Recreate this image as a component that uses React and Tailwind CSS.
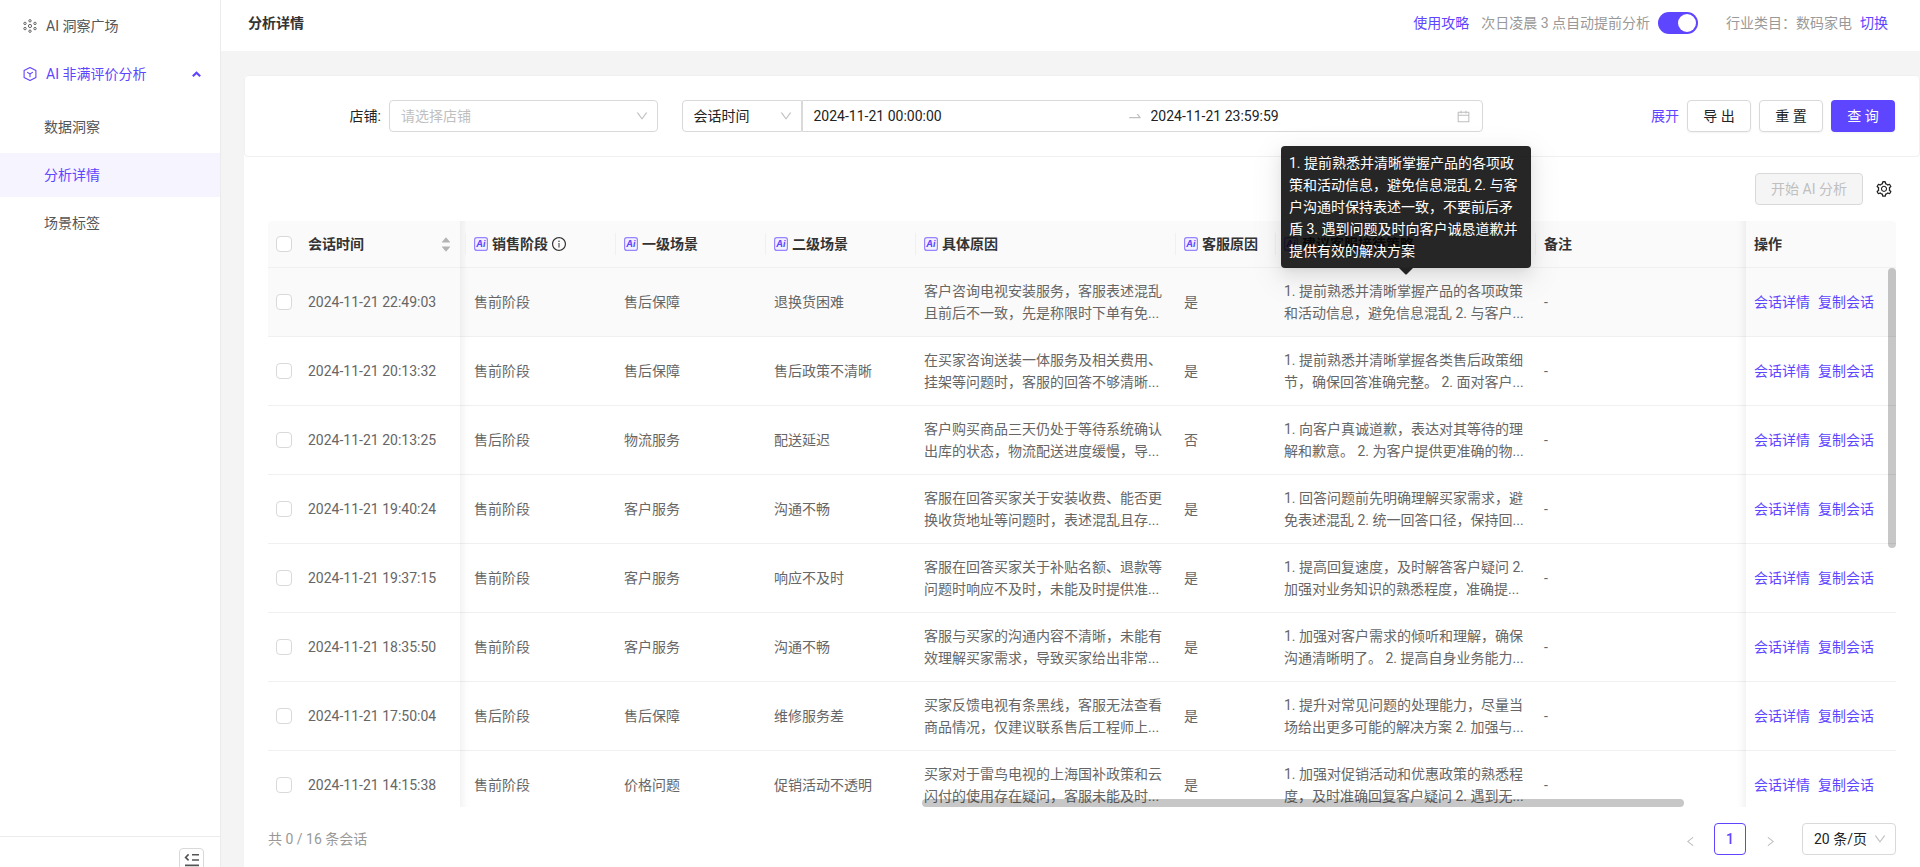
import React, { useState } from 'react';
import {
    AiFillCaretDown,
    AiFillCaretUp,
    AiOutlineCalendar,
    AiOutlineDown,
    AiOutlineInfoCircle,
    AiOutlineLeft,
    AiOutlineRight,
    AiOutlineSetting,
    AiOutlineSwapRight,
} from 'react-icons/ai';

const ROWS = [
    {
        time: '2024-11-21 22:49:03',
        stage: '售前阶段',
        first: '售后保障',
        second: '退换货困难',
        reason: '客户咨询电视安装服务，客服表述混乱\n且前后不一致，先是称限时下单有免...',
        service: '是',
        advice: '1. 提前熟悉并清晰掌握产品的各项政策\n和活动信息，避免信息混乱 2. 与客户...',
    },
    {
        time: '2024-11-21 20:13:32',
        stage: '售前阶段',
        first: '售后保障',
        second: '售后政策不清晰',
        reason: '在买家咨询送装一体服务及相关费用、\n挂架等问题时，客服的回答不够清晰...',
        service: '是',
        advice: '1. 提前熟悉并清晰掌握各类售后政策细\n节，确保回答准确完整。 2. 面对客户...',
    },
    {
        time: '2024-11-21 20:13:25',
        stage: '售后阶段',
        first: '物流服务',
        second: '配送延迟',
        reason: '客户购买商品三天仍处于等待系统确认\n出库的状态，物流配送进度缓慢，导...',
        service: '否',
        advice: '1. 向客户真诚道歉，表达对其等待的理\n解和歉意。 2. 为客户提供更准确的物...',
    },
    {
        time: '2024-11-21 19:40:24',
        stage: '售前阶段',
        first: '客户服务',
        second: '沟通不畅',
        reason: '客服在回答买家关于安装收费、能否更\n换收货地址等问题时，表述混乱且存...',
        service: '是',
        advice: '1. 回答问题前先明确理解买家需求，避\n免表述混乱 2. 统一回答口径，保持回...',
    },
    {
        time: '2024-11-21 19:37:15',
        stage: '售前阶段',
        first: '客户服务',
        second: '响应不及时',
        reason: '客服在回答买家关于补贴名额、退款等\n问题时响应不及时，未能及时提供准...',
        service: '是',
        advice: '1. 提高回复速度，及时解答客户疑问 2.\n加强对业务知识的熟悉程度，准确提...',
    },
    {
        time: '2024-11-21 18:35:50',
        stage: '售前阶段',
        first: '客户服务',
        second: '沟通不畅',
        reason: '客服与买家的沟通内容不清晰，未能有\n效理解买家需求，导致买家给出非常...',
        service: '是',
        advice: '1. 加强对客户需求的倾听和理解，确保\n沟通清晰明了。 2. 提高自身业务能力...',
    },
    {
        time: '2024-11-21 17:50:04',
        stage: '售后阶段',
        first: '售后保障',
        second: '维修服务差',
        reason: '买家反馈电视有条黑线，客服无法查看\n商品情况，仅建议联系售后工程师上...',
        service: '是',
        advice: '1. 提升对常见问题的处理能力，尽量当\n场给出更多可能的解决方案 2. 加强与...',
    },
    {
        time: '2024-11-21 14:15:38',
        stage: '售前阶段',
        first: '价格问题',
        second: '促销活动不透明',
        reason: '买家对于雷鸟电视的上海国补政策和云\n闪付的使用存在疑问，客服未能及时...',
        service: '是',
        advice: '1. 加强对促销活动和优惠政策的熟悉程\n度，及时准确回复客户疑问 2. 遇到无...',
    },
];

const FULL_ADVICE =
    '1. 提前熟悉并清晰掌握产品的各项政策和活动信息，避免信息混乱 2. 与客户沟通时保持表述一致，不要前后矛盾 3. 遇到问题及时向客户诚恳道歉并提供有效的解决方案';

const DotsIcon = () => (
    <svg width="14" height="14" viewBox="0 0 14 14" fill="none" stroke="currentColor" strokeWidth="0.9">
        <circle cx="7" cy="1.8" r="1.2" />
        <circle cx="7" cy="7" r="1.6" />
        <circle cx="7" cy="12.2" r="1.2" />
        <circle cx="2" cy="4.4" r="1.2" />
        <circle cx="2" cy="9.6" r="1.2" />
        <circle cx="12" cy="4.4" r="1.2" />
        <circle cx="12" cy="9.6" r="1.2" />
    </svg>
);

const CubeIcon = () => (
    <svg width="14" height="14" viewBox="0 0 14 14" fill="none" stroke="currentColor" strokeWidth="1.1" strokeLinejoin="round">
        <path d="M7 0.6 L12.9 3.5 V10.5 L7 13.4 L1.1 10.5 V3.5 Z" />
        <path d="M4.5 5.4 L7 7 L9.5 5.4 M7 7 V9.8" strokeLinecap="round" />
    </svg>
);

const ArrowUpIcon = () => (
    <svg width="9" height="6" viewBox="0 0 9 6" fill="none" stroke="currentColor" strokeWidth="2.2">
        <path d="M0.8 5.2 L4.5 1.8 L8.2 5.2" />
    </svg>
);

const FoldIcon = () => (
    <svg width="16" height="14" viewBox="0 0 16 14" fill="none" stroke="currentColor" strokeWidth="1.6">
        <path d="M4.6 1.4 L1.6 4.4 L4.6 7.4" />
        <path d="M8 1.8 H15 M8 7 H15 M1 12.4 H15" />
    </svg>
);

const AiBadge = () => (
    <svg width="14" height="14" viewBox="0 0 14 14" className="shrink-0">
        <rect x="0.6" y="0.6" width="12.8" height="12.8" rx="2.2" fill="#f4f1ff" stroke="#9585ff" strokeWidth="1.2" />
        <text x="6.8" y="10.2" textAnchor="middle" fontFamily="Inter, sans-serif" fontSize="9" fontWeight="700" fontStyle="italic" fill="#5e45ff">
            Ai
        </text>
    </svg>
);

const Check = ({ label }) => (
    <input
        type="checkbox"
        aria-label={label}
        className="block h-4 w-4 appearance-none rounded border border-[#d9d9d9] bg-white checked:border-[#5e45ff] checked:bg-[#5e45ff]"
    />
);

const Select = ({ id, label, className = '', textClass = 'text-[#222]', children }) => (
    <div className={`relative h-8 border border-[#d9d9d9] bg-white ${className}`}>
        <select id={id} aria-label={label} className={`h-full w-full appearance-none bg-transparent pl-[11px] pr-6 outline-none ${textClass}`}>
            {children}
        </select>
        <AiOutlineDown size={14} className="pointer-events-none absolute right-2 top-2 text-[#bfbfbf]" />
    </div>
);

const SideLink = ({ active, children }) => (
    <a href="#" className={`flex h-11 items-center pl-11 ${active ? 'bg-[#f6f4ff] text-[#5e45ff]' : 'text-[#555]'}`}>
        {children}
    </a>
);

const Sidebar = () => (
    <aside className="flex w-[221px] shrink-0 flex-col border-r border-[#ebebeb] bg-white">
        <nav className="flex flex-1 flex-col gap-1 pt-1">
            <a href="#" className="flex h-11 items-center gap-[9px] pl-[23px] text-[#555]">
                <DotsIcon />
                AI 洞察广场
            </a>
            <a href="#" className="mb-[5px] flex h-11 items-center gap-[9px] pl-[23px] pr-[19px] text-[#5e45ff]">
                <CubeIcon />
                <span className="flex-1">AI 非满评价分析</span>
                <ArrowUpIcon />
            </a>
            <SideLink>数据洞察</SideLink>
            <SideLink active>分析详情</SideLink>
            <SideLink>场景标签</SideLink>
        </nav>
        <div className="flex h-[31px] shrink-0 items-start justify-end overflow-hidden border-t border-[#ebebeb] pr-4 pt-[11px]">
            <button aria-label="收起菜单" className="flex h-6 w-[25px] shrink-0 items-center justify-center rounded border border-[#d9d9d9] text-[#555]">
                <FoldIcon />
            </button>
        </div>
    </aside>
);

const TopBar = () => {
    const [auto, setAuto] = useState(true);

    return (
        <header className="flex h-[51px] shrink-0 items-center justify-between bg-white pb-[5px] pl-[27px] pr-8">
            <h1 className="font-bold text-[#333]">分析详情</h1>
            <div className="flex items-center text-[#999]">
                <a href="#" className="mr-3 text-[#5e45ff]">使用攻略</a>
                <span className="mr-2">次日凌晨 3 点自动提前分析</span>
                <button
                    role="switch"
                    aria-checked={auto}
                    aria-label="自动提前分析"
                    onClick={() => setAuto(!auto)}
                    className={`mr-7 flex h-[22px] w-10 items-center rounded-full px-0.5 ${auto ? 'justify-end bg-[#5e45ff]' : 'bg-[#bfbfbf]'}`}
                >
                    <span className="h-[18px] w-[18px] rounded-full bg-white" />
                </button>
                <span className="mr-2">行业类目：数码家电</span>
                <a href="#" className="text-[#5e45ff]">切换</a>
            </div>
        </header>
    );
};

const Filters = () => (
    <form className="grid grid-cols-4 gap-6 rounded border border-[#f0f0f0] bg-white px-6 py-6">
        <div className="flex items-center">
            <label htmlFor="shop" className="w-28 text-right text-[#222]">店铺:</label>
            <Select id="shop" className="ml-2 flex-1 rounded" textClass="text-[#bfbfbf]">
                <option>请选择店铺</option>
            </Select>
        </div>
        <div className="col-span-2 flex">
            <Select label="时间类型" className="w-[120px] rounded-l">
                <option>会话时间</option>
            </Select>
            <div className="flex h-8 flex-1 items-center rounded-r border border-[#d9d9d9] px-[11px] text-[#222]">
                <input aria-label="开始时间" defaultValue="2024-11-21 00:00:00" className="min-w-0 flex-1 outline-none" />
                <AiOutlineSwapRight size={16} className="mx-2 text-[#bfbfbf]" />
                <input aria-label="结束时间" defaultValue="2024-11-21 23:59:59" className="min-w-0 flex-1 outline-none" />
                <AiOutlineCalendar size={15} className="text-[#bfbfbf]" />
            </div>
        </div>
        <div className="flex items-center justify-end gap-2">
            <a href="#" className="text-[#5e45ff]">展开</a>
            <button type="button" className="h-8 w-16 rounded border border-[#d9d9d9] text-[#222] shadow-xs">导 出</button>
            <button type="reset" className="h-8 w-16 rounded border border-[#d9d9d9] text-[#222] shadow-xs">重 置</button>
            <button type="button" className="h-8 w-16 rounded bg-[#5e45ff] text-white shadow-xs">查 询</button>
        </div>
    </form>
);

const Th = ({ ai, last, className = '', children }) => (
    <th className={`relative border-b border-[#f0f0f0] bg-[#fafafa] px-2 py-3 text-left font-bold text-[#333] ${className}`}>
        <span className="flex h-[22px] items-center gap-1">
            {ai && <AiBadge />}
            {children}
        </span>
        {!last && <span className="absolute right-0 top-3 h-[22px] w-px bg-[#f0f0f0]" />}
    </th>
);

// Edge shadows of the two pinned columns
const LeftEdge = () => (
    <span className="pointer-events-none absolute -bottom-px left-[160px] top-0 w-[30px] shadow-[inset_10px_0_8px_-8px_rgba(5,5,5,0.07)]" />
);
const RightEdge = () => (
    <span className="pointer-events-none absolute -bottom-px -left-[30px] top-0 w-[30px] shadow-[inset_-10px_0_8px_-8px_rgba(5,5,5,0.07)]" />
);

const SessionTable = () => (
    <div className="relative min-h-0 flex-1">
        <div className="h-full overflow-hidden rounded-t">
            <table className="w-full table-fixed border-separate border-spacing-0">
                <colgroup>
                    <col className="w-8" />
                    <col className="w-[166px]" />
                    <col className="w-[150px]" />
                    <col className="w-[150px]" />
                    <col className="w-[150px]" />
                    <col className="w-[260px]" />
                    <col className="w-[100px]" />
                    <col className="w-[260px]" />
                    <col />
                    <col className="w-[150px]" />
                </colgroup>
                <thead>
                    <tr>
                        <Th last><Check label="全选" /></Th>
                        <Th>
                            <span className="flex-1">会话时间</span>
                            <span className="mr-1.5 flex flex-col text-[#b3b3b3]">
                                <AiFillCaretUp size={12} className="-mb-[3px]" />
                                <AiFillCaretDown size={12} />
                            </span>
                            <LeftEdge />
                        </Th>
                        <Th ai>
                            销售阶段
                            <AiOutlineInfoCircle size={16} className="-ml-px" />
                        </Th>
                        <Th ai>一级场景</Th>
                        <Th ai>二级场景</Th>
                        <Th ai>具体原因</Th>
                        <Th ai>客服原因</Th>
                        <Th ai>建议客服接待策略</Th>
                        <Th last>备注</Th>
                        <Th last>
                            操作
                            <RightEdge />
                        </Th>
                    </tr>
                </thead>
                <tbody className="text-[#666]">
                    {ROWS.map((row, i) => (
                        <tr
                            key={row.time}
                            className={`*:border-b *:border-[#f0f0f0] *:px-2 *:py-3 ${i === 0 ? 'bg-[#fafafa]' : 'bg-white'}`}
                        >
                            <td><Check label={row.time} /></td>
                            <td className="relative">
                                {row.time}
                                <LeftEdge />
                            </td>
                            <td>{row.stage}</td>
                            <td>{row.first}</td>
                            <td>{row.second}</td>
                            <td className="whitespace-pre">{row.reason}</td>
                            <td>{row.service}</td>
                            <td className="whitespace-pre">{row.advice}</td>
                            <td>-</td>
                            <td className="relative whitespace-nowrap text-[#5e45ff]">
                                <a href="#" className="mr-2">会话详情</a>
                                <a href="#">复制会话</a>
                                <RightEdge />
                            </td>
                        </tr>
                    ))}
                </tbody>
            </table>
        </div>

        {/* Scroll thumbs */}
        <div className="absolute right-0 top-[47px] h-[280px] w-2 rounded-full bg-black/22" />
        <div className="absolute bottom-0 left-[40.2%] right-[13%] h-2 rounded-full bg-black/22" />

        {/* Full text of the hovered advice cell */}
        <div role="tooltip" className="absolute -top-[75px] left-[1013px] w-[250px] rounded bg-black/85 px-2 py-[6px] text-white shadow-[0_6px_16px_0_rgba(0,0,0,0.08),0_3px_6px_-4px_rgba(0,0,0,0.12),0_9px_28px_8px_rgba(0,0,0,0.05)]">
            {FULL_ADVICE}
            <svg width="14" height="7" viewBox="0 0 14 7" className="absolute left-1/2 top-full -ml-[7px]">
                <path d="M0 0 H14 L8 6 Q7 7 6 6 Z" fill="black" fillOpacity="0.85" />
            </svg>
        </div>
    </div>
);

const Pagination = () => (
    <div className="flex items-center justify-between pb-3 pt-4">
        <span className="text-[#999]">共 0 / 16 条会话</span>
        <div className="flex items-center gap-2">
            <button aria-label="上一页" className="flex h-8 w-8 items-center justify-center pt-1 text-[#bfbfbf]">
                <AiOutlineLeft size={13} />
            </button>
            <button className="h-8 w-8 rounded border border-[#5e45ff] font-medium text-[#5e45ff]">1</button>
            <button aria-label="下一页" className="flex h-8 w-8 items-center justify-center pt-1 text-[#bfbfbf]">
                <AiOutlineRight size={13} />
            </button>
            <Select label="每页条数" className="ml-2 w-[94px] rounded">
                <option>20 条/页</option>
            </Select>
        </div>
    </div>
);

const App = () => {
    return (
        <div className="flex h-screen overflow-hidden bg-[#f4f4f4] font-['Roboto','Noto_Sans_CJK_SC',sans-serif] text-sm leading-[22px]">
            <Sidebar />
            <div className="flex min-w-0 flex-1 flex-col">
                <TopBar />
                <main className="ml-[23px] mt-6 flex min-h-0 flex-1 flex-col rounded-t bg-white">
                    <Filters />
                    <section className="flex min-h-0 flex-1 flex-col px-6 pt-4">
                        <div className="flex items-center justify-end gap-3 pb-4 pr-[3px]">
                            <button disabled className="h-8 rounded border border-[#d9d9d9] bg-[#f5f5f5] px-[15px] text-[#bfbfbf]">
                                开始 AI 分析
                            </button>
                            <button aria-label="设置" className="text-[#222]">
                                <AiOutlineSetting size={18} />
                            </button>
                        </div>
                        <SessionTable />
                        <Pagination />
                    </section>
                </main>
            </div>
        </div>
    );
};

export default App;
